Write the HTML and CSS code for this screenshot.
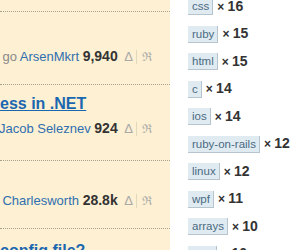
FILE: index.html
```html
<!DOCTYPE html>
<html>
<head>
<meta charset="utf-8">
<link rel="stylesheet" href="styles.css">
</head>
<body>
<div class="page">
  <div class="questions">
    <div class="q q-prev"></div>
    <div class="q q-1">
      <div class="started"><span class="line"><span class="ago">go</span> <a class="user">ArsenMkrt</a> <span class="rep">9,940</span> <span class="acts"><span class="act">Δ</span><span class="act act-r">ℜ</span></span></span></div>
    </div>
    <div class="q q-2">
      <a class="title">ess in .NET</a>
      <div class="started"><span class="line"><a class="user">Jacob Seleznev</a> <span class="rep">924</span> <span class="acts"><span class="act">Δ</span><span class="act act-r">ℜ</span></span></span></div>
    </div>
    <div class="q q-3">
      <div class="started"><span class="line"><a class="user">Charlesworth</a> <span class="rep">28.8k</span> <span class="acts"><span class="act">Δ</span><span class="act act-r">ℜ</span></span></span></div>
    </div>
    <div class="q q-4">
      <a class="title">config file?</a>
    </div>
  </div>
  <div class="tags">
    <div class="tag-row"><a class="tag">css</a> <span class="mult">× <b>16</b></span></div>
    <div class="tag-row"><a class="tag">ruby</a> <span class="mult">× <b>15</b></span></div>
    <div class="tag-row"><a class="tag">html</a> <span class="mult">× <b>15</b></span></div>
    <div class="tag-row"><a class="tag">c</a> <span class="mult">× <b>14</b></span></div>
    <div class="tag-row"><a class="tag">ios</a> <span class="mult">× <b>14</b></span></div>
    <div class="tag-row"><a class="tag">ruby-on-rails</a> <span class="mult">× <b>12</b></span></div>
    <div class="tag-row"><a class="tag">linux</a> <span class="mult">× <b>12</b></span></div>
    <div class="tag-row"><a class="tag">wpf</a> <span class="mult">× <b>11</b></span></div>
    <div class="tag-row"><a class="tag">arrays</a> <span class="mult">× <b>10</b></span></div>
    <div class="tag-row"><a class="tag">java</a> <span class="mult">× <b>10</b></span></div>
  </div>
</div>
</body>
</html>
```

FILE: styles.css
```css
html, body {
  margin: 0;
  padding: 0;
  background: #ffffff;
  overflow: hidden;
}

body {
  font-family: "Liberation Sans", Arial, sans-serif;
  color: #333333;
}

.page {
  display: flex;
  align-items: flex-start;
  gap: 18px;
  width: 300px;
  height: 250px;
  overflow: hidden;
}

.questions {
  width: 170px;
  flex: none;
  background: #fdf0d3;
  height: 250px;
  display: flex;
  flex-direction: column;
}

.q {
  border-bottom: 1px dotted #a8a08e;
  display: flex;
  flex-direction: column;
  padding: 7px 18px 0 0;
  box-sizing: border-box;
  flex: none;
}

.q-prev { height: 12px; padding: 0; }
.q-1 { height: 73px; padding-bottom: 18px; }
.q-2 { height: 76px; padding-bottom: 22px; }
.q-3 { height: 68px; padding-bottom: 18px; }
.q-4 { border-bottom: none; padding-top: 10px; }

.title {
  font-size: 16px;
  line-height: 24px;
  font-weight: bold;
  color: #1a67b0;
  text-decoration: underline;
  white-space: nowrap;
}

.started {
  margin-top: auto;
  display: flex;
  justify-content: flex-end;
  white-space: nowrap;
  font-size: 13px;
  line-height: 18px;
}

.line { flex: none; }

.ago { color: #8a8a8a; }

.user { color: #2f6fb0; }

.rep {
  font-size: 14px;
  font-weight: bold;
  color: #333333;
}

.acts {
  margin-left: 3px;
  color: #a8a8a8;
  font-size: 13px;
}

.act-r {
  font-family: "DejaVu Serif", serif;
  font-size: 12px;
  border-left: 1px solid #e2d6bc;
  margin-left: 3px;
  padding-left: 5px;
}

.tags {
  display: flex;
  flex-direction: column;
  gap: 10.5px;
  margin-top: -2px;
}

.tag-row {
  white-space: nowrap;
  line-height: 17px;
  height: 17px;
  display: flex;
  align-items: center;
}

.tag {
  display: inline-block;
  font-size: 11.5px;
  line-height: 13px;
  color: #4a6b82;
  background: #e0eaf1;
  border-right: 1px solid #b6c4ce;
  border-bottom: 1px solid #b6c4ce;
  padding: 2px 3px 1px 4px;
}

.mult {
  margin-left: 4px;
  font-size: 12px;
  font-weight: bold;
  color: #333333;
}

.mult b {
  font-size: 14px;
}
```
